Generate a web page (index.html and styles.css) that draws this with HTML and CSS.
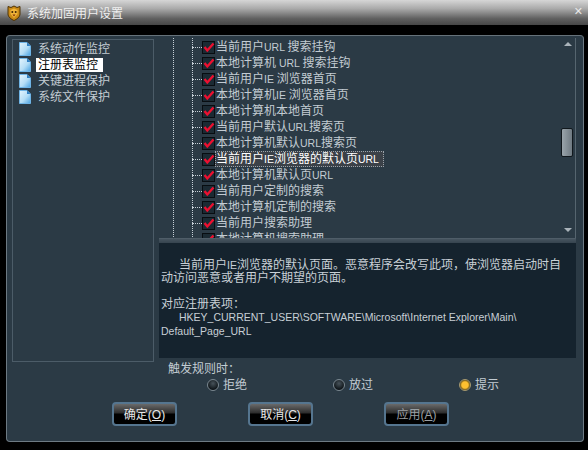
FILE: index.html
```html
<!DOCTYPE html>
<html>
<head>
    <title>系统加固用户设置</title>
    <link rel="stylesheet" href="styles.css">
</head>
<body>
    <svg class="defs" width="0" height="0">
        <defs>
            <linearGradient id="pageFill" x1="0" y1="0" x2="1" y2="1">
                <stop offset="0" stop-color="#e4f4fd"/>
                <stop offset="0.55" stop-color="#b5def6"/>
                <stop offset="1" stop-color="#4aa3e2"/>
            </linearGradient>
            <symbol id="page" viewBox="0 0 12 14">
                <path d="M0.5 0.5H8L11.5 4V13.5H0.5Z" fill="url(#pageFill)" stroke="#6fb4e6"/>
                <path d="M8 0.5V4H11.5Z" fill="#2f7fc4"/>
            </symbol>
            <symbol id="check" viewBox="0 0 13 13">
                <rect x="0.5" y="0.5" width="12" height="12" fill="#1b2a33" stroke="#080d11"/>
                <path d="M2.5 6L5.3 9.5L11.5 2.5" fill="none" stroke="#ec1030" stroke-width="2.4"/>
            </symbol>
        </defs>
    </svg>

    <div class="titlebar">
        <svg class="logo" width="14" height="16" viewBox="0 0 14 16">
            <path d="M1 1.5L4 2.5L7 1L10 2.5L13 1.5V9C13 12 9.5 14.5 7 15.5C4.5 14.5 1 12 1 9Z" fill="#c98a16" stroke="#4d3206"/>
            <path d="M3.5 5L7 3.5L10.5 5V9L7 13L3.5 9Z" fill="#f2b63a"/>
            <circle cx="5.3" cy="7" r="1" fill="#3e2404"/>
            <circle cx="8.7" cy="7" r="1" fill="#3e2404"/>
            <path d="M5.5 9.5H8.5L7 11.5Z" fill="#7a2b08"/>
        </svg>
        <span class="title">系统加固用户设置</span>
        <span class="close">✕</span>
    </div>

    <div class="panel">
        <div class="panel-main">
            <ul class="side">
                <li><svg class="doc"><use href="#page"/></svg><span>系统动作监控</span></li>
                <li class="on"><svg class="doc"><use href="#page"/></svg><span>注册表监控</span></li>
                <li><svg class="doc"><use href="#page"/></svg><span>关键进程保护</span></li>
                <li><svg class="doc"><use href="#page"/></svg><span>系统文件保护</span></li>
            </ul>

            <div class="content">
                <div class="tree-wrap">
                    <ul class="tree">
                        <li><i></i><svg class="chk"><use href="#check"/></svg><span>当前用户<em>URL </em>搜索挂钩</span></li>
                        <li><i></i><svg class="chk"><use href="#check"/></svg><span>本地计算机<em> URL </em>搜索挂钩</span></li>
                        <li><i></i><svg class="chk"><use href="#check"/></svg><span>当前用户<em>IE </em>浏览器首页</span></li>
                        <li><i></i><svg class="chk"><use href="#check"/></svg><span>本地计算机<em>IE </em>浏览器首页</span></li>
                        <li><i></i><svg class="chk"><use href="#check"/></svg><span>本地计算机本地首页</span></li>
                        <li><i></i><svg class="chk"><use href="#check"/></svg><span>当前用户默认<em>URL</em>搜索页</span></li>
                        <li><i></i><svg class="chk"><use href="#check"/></svg><span>本地计算机默认<em>URL</em>搜索页</span></li>
                        <li class="on"><i></i><svg class="chk"><use href="#check"/></svg><span>当前用户<em>IE</em>浏览器的默认页<em>URL</em></span></li>
                        <li><i></i><svg class="chk"><use href="#check"/></svg><span>本地计算机默认页<em>URL</em></span></li>
                        <li><i></i><svg class="chk"><use href="#check"/></svg><span>当前用户定制的搜索</span></li>
                        <li><i></i><svg class="chk"><use href="#check"/></svg><span>本地计算机定制的搜索</span></li>
                        <li><i></i><svg class="chk"><use href="#check"/></svg><span>当前用户搜索助理</span></li>
                        <li><i></i><svg class="chk"><use href="#check"/></svg><span>本地计算机搜索助理</span></li>
                    </ul>
                    <div class="scroll">
                        <b class="arrow up"></b>
                        <b class="thumb"></b>
                        <b class="arrow down"></b>
                    </div>
                </div>
                <div class="split"></div>
                <div class="desc">
                    <p class="indent">当前用户<em>IE</em>浏览器的默认页面。恶意程序会改写此项，使浏览器启动时自动访问恶意或者用户不期望的页面。</p>
                    <p class="gap">对应注册表项：</p>
                    <p class="indent"><em>HKEY_CURRENT_USER\SOFTWARE\Microsoft\Internet Explorer\Main\</em><br><em>Default_Page_URL</em></p>
                </div>
                <div class="rule">触发规则时：</div>
                <div class="radios">
                    <label><i class="radio"></i>拒绝</label>
                    <label><i class="radio"></i>放过</label>
                    <label><i class="radio sel"></i>提示</label>
                </div>
            </div>
        </div>

        <div class="buttons">
            <button>确定(<u>O</u>)</button>
            <button>取消(<u>C</u>)</button>
            <button class="off">应用(<u>A</u>)</button>
        </div>
    </div>
</body>
</html>
```

FILE: styles.css
```css
html, body {
    margin: 0;
    height: 450px;
    overflow: hidden;
    background: #000;
    font-family: "Liberation Sans", "Noto Sans CJK SC", sans-serif;
    font-size: 12px;
    color: #c3ccd3;
}
ul {
    list-style: none;
    margin: 0;
    padding: 0;
}
p {
    margin: 0;
}
em {
    font-style: normal;
    font-size: 10.5px;
}
.defs {
    position: absolute;
}
.titlebar {
    height: 25px;
    display: flex;
    align-items: center;
    padding: 0 5px 0 7px;
    background: linear-gradient(#d6d6d6, #a9a9a9 35%, #5f5f5f 75%, #474747);
}
.logo {
    flex: none;
}
.title {
    margin-left: 6px;
    font-size: 12px;
    color: #f0f0f0;
    flex: 1;
}
.close {
    color: #e8e8e8;
    font-size: 11px;
    font-family: "DejaVu Sans", sans-serif;
    margin-bottom: 3px;
}
.panel {
    margin: 10px 4px 0 6px;
    height: 407px;
    box-sizing: border-box;
    padding: 3px 7px 0 5px;
    background: #2b3a45;
    border: 1px solid #6d7a83;
    border-top-color: #66727a;
    border-radius: 4px;
}
.panel-main {
    display: grid;
    grid-template-columns: 142px 417px;
    column-gap: 5px;
}
.side {
    height: 323px;
    box-sizing: border-box;
    padding-top: 1px;
    border: 1px solid #4c5c68;
}
.side li {
    height: 16px;
    display: flex;
    align-items: center;
    padding-left: 6px;
}
.doc {
    width: 12px;
    height: 14px;
    flex: none;
}
.side span {
    margin-left: 5px;
    padding: 0 5px 0 2px;
    line-height: 14px;
}
.side .on span {
    background: #fff;
    color: #000;
}
.content {
    margin-top: -1px;
}
.tree-wrap {
    height: 200px;
    display: flex;
    overflow: hidden;
    position: relative;
    box-sizing: border-box;
    border-right: 1px solid #56656f;
}
.tree {
    flex: 1;
    padding: 1px 0 0 33px;
    background-image:
        linear-gradient(#c6cfd6 50%, transparent 50%),
        linear-gradient(#c6cfd6 50%, transparent 50%);
    background-size: 1px 2px, 1px 2px;
    background-repeat: repeat-y;
    background-position: 14px 0, 33px 0;
}
.tree li {
    height: 16px;
    display: flex;
    align-items: center;
}
.tree i {
    width: 10px;
    height: 0;
    border-top: 1px dotted #c6cfd6;
    flex: none;
}
.chk {
    width: 13px;
    height: 13px;
    flex: none;
}
.tree span {
    line-height: 14px;
    white-space: nowrap;
    border: 1px solid transparent;
}
.tree .on span {
    padding-right: 4px;
    background: #3b4148;
    border: 1px dotted #9aa3aa;
    color: #fff;
}
.scroll {
    position: absolute;
    top: 0;
    bottom: 0;
    right: 0;
    width: 15px;
}
.arrow {
    position: absolute;
    right: 3px;
    width: 0;
    height: 0;
    border: 4px solid transparent;
}
.arrow.up {
    top: 0;
    border-bottom-color: #aab3ba;
}
.arrow.down {
    bottom: 2px;
    border-top-color: #aab3ba;
}
.thumb {
    position: absolute;
    top: 90px;
    right: 2px;
    width: 10px;
    height: 27px;
    border: 1px solid #11181d;
    border-radius: 2px;
    background: linear-gradient(90deg, #9aa4ab, #6f7a82);
}
.split {
    height: 5px;
    background: linear-gradient(#46545f, #36444f);
    border-top: 1px solid #4f5d68;
    box-sizing: border-box;
}
.desc {
    height: 115px;
    box-sizing: border-box;
    padding: 16px 12px 0 2px;
    background: #15232e;
    line-height: 13.4px;
    color: #c8d0d6;
}
.indent {
    text-indent: 18px;
}
.gap {
    margin-top: 12px;
}
.rule {
    margin: 3px 0 0 9px;
    line-height: 16px;
}
.radios {
    display: flex;
    margin: 0 0 0 48px;
}
.radios label {
    flex: none;
    width: 126px;
    display: flex;
    align-items: center;
    gap: 4px;
    line-height: 16px;
}
.radio {
    width: 10px;
    height: 10px;
    border-radius: 50%;
    border: 1px solid #7a8790;
    background: radial-gradient(circle at 50% 35%, #47525a, #0c1216 75%);
    box-sizing: content-box;
}
.radio.sel {
    background: radial-gradient(circle, #ffc030 45%, #4a3a10 75%);
    border-color: #a89a70;
}
.buttons {
    display: flex;
    gap: 71px;
    margin: 9px 0 0 100px;
}
button {
    width: 65px;
    height: 24px;
    padding: 0 0 2px;
    border: 2px solid #55758f;
    border-radius: 4px;
    background: linear-gradient(#6a6a6a, #2c2c2c 45%, #000 50%, #000);
    color: #e8e8e8;
    font-family: inherit;
    font-size: 12px;
}
button.off {
    color: #9a9fa3;
}
```
